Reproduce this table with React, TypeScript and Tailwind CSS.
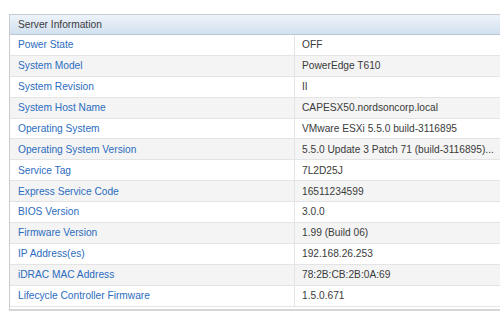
import React from 'react';

const ROWS: [string, string][] = [
  ['Power State', 'OFF'],
  ['System Model', 'PowerEdge T610'],
  ['System Revision', 'II'],
  ['System Host Name', 'CAPESX50.nordsoncorp.local'],
  ['Operating System', 'VMware ESXi 5.5.0 build-3116895'],
  ['Operating System Version', '5.5.0 Update 3 Patch 71 (build-3116895)...'],
  ['Service Tag', '7L2D25J'],
  ['Express Service Code', '16511234599'],
  ['BIOS Version', '3.0.0'],
  ['Firmware Version', '1.99 (Build 06)'],
  ['IP Address(es)', '192.168.26.253'],
  ['iDRAC MAC Address', '78:2B:CB:2B:0A:69'],
  ['Lifecycle Controller Firmware', '1.5.0.671'],
];

const App: React.FC = () => {
  return (
    <div className="w-[500px] h-[321px] overflow-hidden bg-white font-['Liberation_Sans',Arial,sans-serif]">
      <div className="pt-[14px] pl-[9px]">
        <div className="w-[520px] border border-[#c9cdd2] border-b-2 border-b-[#d6d6d6] pb-[2px]">
          <div className="h-[20px] flex items-center pt-[1px] pl-[8px] text-[10.2px] text-[#3a3a3a] bg-gradient-to-b from-[#edf3fa] to-[#d2e1f0] border-b border-[#b9c7d6]">
            Server Information
          </div>
          {ROWS.map(([label, value], idx) => (
            <div
              key={label}
              className={`flex h-[20.9px] border-b border-[#e4e4e4] text-[10.2px] ${idx % 2 === 1 ? 'bg-[#f4f4f4]' : 'bg-white'}`}
            >
              <div className="w-[285px] flex items-center pl-[8px] text-[#2b6cc0] border-r border-[#e4e4e4]">
                {label}
              </div>
              <div className="flex-1 flex items-center pl-[7px] text-[#3a3a3a] whitespace-nowrap">
                {value}
              </div>
            </div>
          ))}
        </div>
      </div>
    </div>
  );
};

export default App;
